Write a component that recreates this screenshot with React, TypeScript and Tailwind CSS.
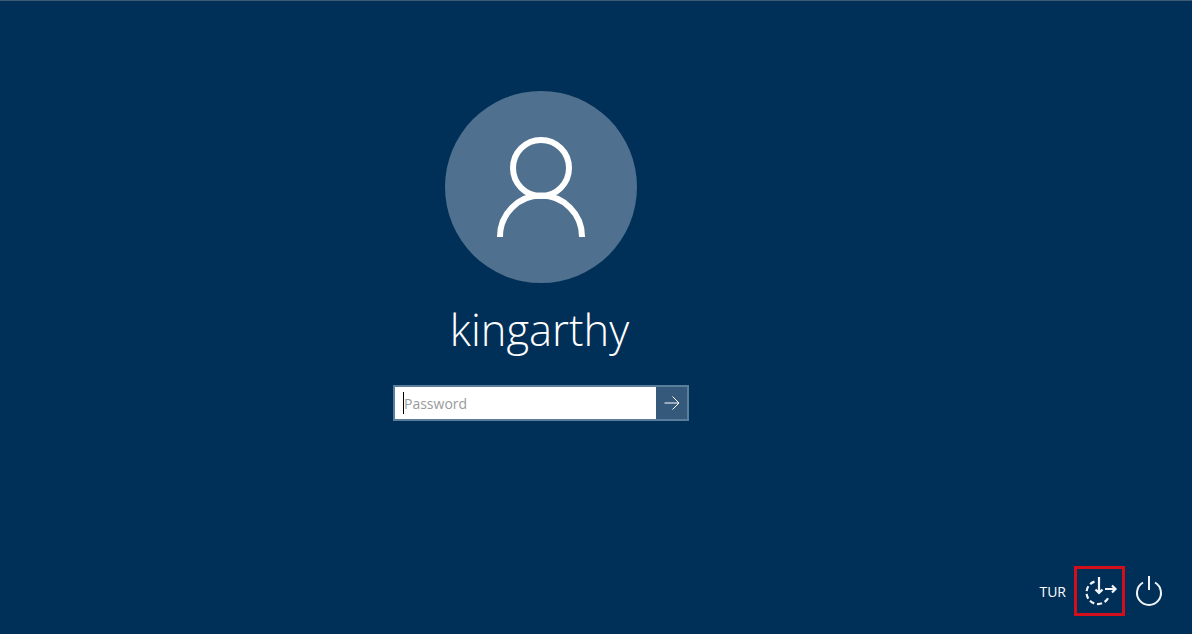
const App = () => {
  return (
    <div className="flex h-[634px] w-[1192px] flex-col overflow-hidden border-t border-[#3d5a74] bg-[#003058] font-['Open_Sans',sans-serif] text-white">
      <main className="ml-[393px] flex w-[296px] flex-col items-center pt-[90px]">
        <div className="flex h-[192px] w-[192px] items-center justify-center rounded-full bg-[#4f708e]">
          <svg width="192" height="192" viewBox="0 0 192 192" fill="none" stroke="#fff" strokeWidth="6">
            <circle cx="96" cy="77" r="28" />
            <path d="M55 146v-.5a41 41 0 0 1 82 0v.5" />
          </svg>
        </div>
        <h1 className="mt-[16px] mr-[3px] h-[62px] text-[43.5px] leading-[62px] font-light">kingarthy</h1>
        <form className="mt-[24px] flex h-[36px] w-[296px] border-2 border-[#5a7d9c] bg-white">
          <div className="flex flex-1 items-center pl-[8px]">
            <span className="h-[22px] w-px bg-black" />
            <span className="text-[14px] text-[#9a9a9a]">Password</span>
          </div>
          <button type="button" className="flex w-[31px] items-center justify-center bg-[#35597b]">
            <svg width="16" height="16" viewBox="0 0 16 16" fill="none" stroke="#fff" strokeWidth="1">
              <path d="M0.5 8h14.5M8.5 1.5 15 8l-6.5 6.5" />
            </svg>
          </button>
        </form>
      </main>
      <footer className="mt-[145px] flex items-center justify-end pr-[28px]">
        <span className="mr-[8px] pt-[1px] text-[14px]">TUR</span>
        <div className="flex h-[50px] w-[51px] border-[3px] border-[#d30f1b]">
          <svg width="45" height="44" viewBox="0 0 45 44" fill="none" stroke="#f2f6fa" strokeWidth="2.2">
            <path d="M17.5 12.6A11.5 11.5 0 1 0 32 27" strokeDasharray="5 2.8" />
            <path d="M22 8v16M18.5 20.5l3.5 3.5 3.5-3.5" />
            <path d="M28 20h10.5M35 16.5l3.5 3.5-3.5 3.5" />
          </svg>
        </div>
        <div className="ml-[9px]">
          <svg className="block" width="30" height="30" viewBox="0 0 30 30" fill="none" stroke="#eef4f8" strokeWidth="2">
            <path d="M15 0v14" />
            <path d="M9 6.5a12 12 0 1 0 12 0" />
          </svg>
        </div>
      </footer>
    </div>
  );
};

export default App;
